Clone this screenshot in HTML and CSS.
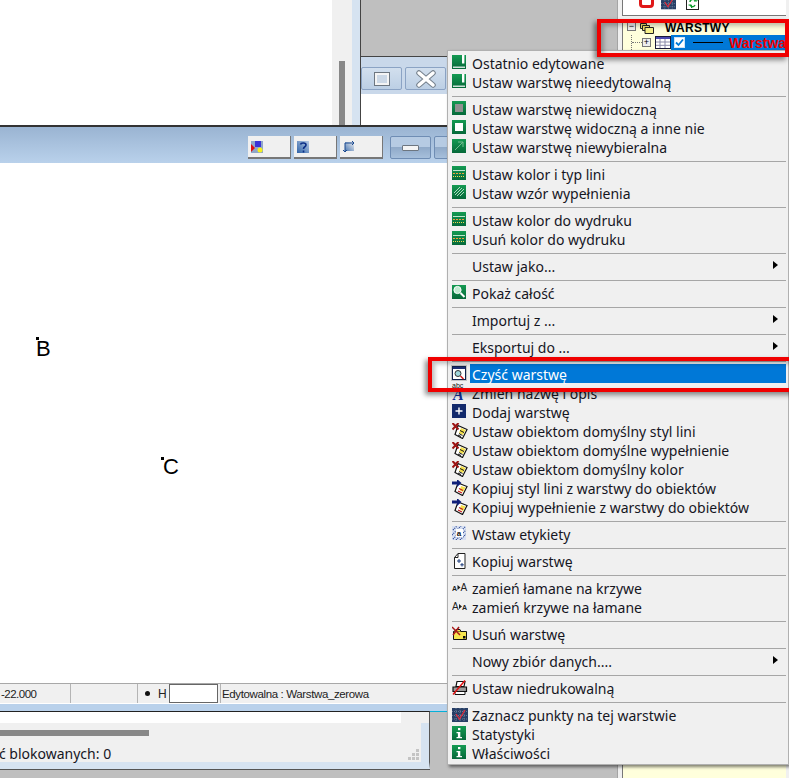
FILE: index.html
```html
<!DOCTYPE html>
<html lang="pl">
<head>
    <meta charset="UTF-8">
    <title>Warstwy</title>
    <link rel="stylesheet" href="styles.css">
</head>
<body>
    <!-- Wspolne ikony menu -->
    <svg class="defs" width="0" height="0">
        <defs>
            <linearGradient id="g-green" x1="0" y1="0" x2="0" y2="1">
                <stop offset="0" stop-color="#149a52"/>
                <stop offset="1" stop-color="#06693a"/>
            </linearGradient>
            <symbol id="i-edit" viewBox="0 0 14 14">
                <rect width="14" height="14" fill="url(#g-green)"/>
                <rect x="10" y="0" width="2.4" height="8.5" fill="#fff"/>
                <rect x="1" y="11.6" width="12" height="1.2" fill="#fff"/>
            </symbol>
            <symbol id="i-hide" viewBox="0 0 14 14">
                <rect width="14" height="14" fill="url(#g-green)"/>
                <rect x="3" y="3" width="8" height="8" fill="#909090"/>
            </symbol>
            <symbol id="i-only" viewBox="0 0 14 14">
                <rect width="14" height="14" fill="url(#g-green)"/>
                <rect x="3" y="3" width="8" height="8" fill="#fff"/>
            </symbol>
            <symbol id="i-nosel" viewBox="0 0 14 14">
                <rect width="14" height="14" fill="url(#g-green)"/>
                <path d="M3 11 11 3M6 3h5v5" fill="none" stroke="#74bb90" stroke-width="1"/>
            </symbol>
            <symbol id="i-line" viewBox="0 0 14 14">
                <rect width="14" height="14" fill="url(#g-green)"/>
                <path d="M1 4.500h12" stroke="#bfe6cc"/>
                <path d="M1 7.500h12" stroke="#f2a13a" stroke-dasharray="2 1"/>
                <path d="M1 10.500h12" stroke="#f5d94e" stroke-dasharray="1 1"/>
            </symbol>
            <symbol id="i-fill" viewBox="0 0 14 14">
                <rect width="14" height="14" fill="url(#g-green)"/>
                <path d="M2 8 8 2M3 10 10 3M5 11 12 4M8 11 12 7" stroke="#d8efe0" stroke-width=".8"/>
            </symbol>
            <symbol id="i-zoom" viewBox="0 0 14 14">
                <rect width="14" height="14" fill="url(#g-green)"/>
                <circle cx="5.5" cy="5" r="3.6" fill="#bfead0" stroke="#fff"/>
                <path d="M8.5 8 12.5 12" stroke="#fff" stroke-width="2"/>
            </symbol>
            <symbol id="i-clear" viewBox="0 0 14 14">
                <rect x=".5" y=".5" width="13" height="13" fill="#fff" stroke="#10204c"/>
                <rect x="1" y="1" width="12" height="2" fill="#1c2f73"/>
                <circle cx="6" cy="7.5" r="3" fill="#9fd6dc" stroke="#333"/>
                <path d="M8.5 10 11.5 13" stroke="#d01818" stroke-width="1.5"/>
            </symbol>
            <symbol id="i-add" viewBox="0 0 14 14">
                <rect width="14" height="14" fill="#12296b"/>
                <path d="M7 3.5v7M3.5 7h7" stroke="#fff" stroke-width="1.4"/>
            </symbol>
            <symbol id="i-xdoc" viewBox="0 0 16 16">
                <path d="M6 2.500 15 6.500 10.500 15.500 3 11.500Z" fill="#fff" stroke="#111" stroke-width="1.200"/>
                <path d="M9 5 13.500 7 11 12 7 10Z" fill="#f4e04a"/>
                <path d="M7 10.500 10.500 12.500M6 12 9 13.500M8 7.500 12 9.500" stroke="#111"/>
                <path d="M.5 0 6.500 6.500M6.500 0 .5 6.500" stroke="#9c1414" stroke-width="2"/>
            </symbol>
            <symbol id="i-adoc" viewBox="0 0 16 16">
                <path d="M6 3 15 6.500 10.500 15.500 3 11.500Z" fill="#fff" stroke="#111" stroke-width="1.200"/>
                <path d="M9 6 13.500 7.500 11 12 8 10.500Z" fill="#f4e04a"/>
                <path d="M7 8.500 11 10.500M6 11 10 13" stroke="#c01818" stroke-width="1.200"/>
                <path d="M0 1.500h5V-1L9.500 3 5 7V4.500H0Z" fill="#10207a"/>
            </symbol>
            <symbol id="i-label" viewBox="0 0 14 14">
                <rect width="14" height="14" fill="#d7e0f2"/>
                <path d="M1 4 5 0M0 9 9 0M1 13 13 1M4 14 14 4M8 14 14 8" stroke="#23408f" stroke-width="1.200" stroke-dasharray="1 1"/>
                <rect x="4" y="3" width="7" height="8" fill="#fff"/>
                <text x="4.700" y="10" class="svg-a">a</text>
            </symbol>
            <symbol id="i-copy" viewBox="0 0 14 16">
                <path d="M1.500 4.500 5 .5h7v15H1.500Z" fill="#fff" stroke="#222"/>
                <path d="M1.500 4.500H5V.5" fill="none" stroke="#222"/>
                <path d="M6 6v4M4 8h4M9 10v3.500M7.300 11.800h3.500" stroke="#1b3a7a"/>
            </symbol>
            <symbol id="i-swap-a" viewBox="0 0 16 10">
                <text x="0" y="8.500" class="svg-small">A</text>
                <path d="M5.500 3 8.500 5.500 5.500 8Z" fill="#222"/>
                <text x="8.500" y="8.500" class="svg-big">A</text>
            </symbol>
            <symbol id="i-swap-b" viewBox="0 0 16 10">
                <text x="0" y="8.500" class="svg-big">A</text>
                <path d="M7 3 10 5.500 7 8Z" fill="#222"/>
                <text x="10" y="8.500" class="svg-small">A</text>
            </symbol>
            <symbol id="i-del" viewBox="0 0 16 14">
                <path d="M1.500 4.500h13v8h-13Z" fill="#f6e64f" stroke="#111"/>
                <path d="M2 4.500 4 2.500h4l1 2" fill="#f6e64f" stroke="#111"/>
                <rect x="11" y="9" width="2.500" height="2.500" fill="#111"/>
                <path d="M0 0 8 8M7 0 1 8" stroke="#a81818" stroke-width="1.500"/>
            </symbol>
            <symbol id="i-print" viewBox="0 0 16 15">
                <path d="M5 1h8l-1 5H4Z" fill="#fff" stroke="#111" stroke-width="1.200"/>
                <path d="M1 6.500h13.500v4.500H1Z" fill="#9c9c9c" stroke="#111" stroke-width="1.200"/>
                <path d="M3 11h10v3H3Z" fill="#fff" stroke="#111"/>
                <path d="M1 14 13 0" stroke="#e01010" stroke-width="1.500"/>
            </symbol>
            <symbol id="i-mark" viewBox="0 0 16 14">
                <rect width="16" height="14" fill="#273f66"/>
                <path d="M0 3.500h16M0 7.500h16M0 11h16M4 0v14M8 0v14M12 0v14" stroke="#8494ad" stroke-width=".7" stroke-dasharray="1 1"/>
                <path d="M4 6 7.500 11 13 2" fill="none" stroke="#e02c3c" stroke-width="1.300"/>
            </symbol>
            <symbol id="i-info" viewBox="0 0 14 14">
                <rect width="14" height="14" fill="url(#g-green)"/>
                <rect x="6" y="2" width="2.400" height="2.200" fill="#fff"/>
                <path d="M4.500 6h3.800v5H10v1.300H4.500V11h1.400V7.200H4.500Z" fill="#fff"/>
            </symbol>
        </defs>
    </svg>

    <div class="desktop">
        <!-- Okno w tle po lewej -->
        <section class="win win-back">
            <div class="back-view"></div>
            <div class="back-scroll"><div class="back-thumb"></div></div>
        </section>

        <!-- Okno w tle za menu -->
        <section class="win win-side">
            <div class="side-title">
                <div class="cap-btn cap-side"><span class="glyph-max"></span></div>
                <div class="cap-btn cap-side">
                    <svg width="20" height="18" viewBox="0 0 20 18"><path d="M3 3 17 15M17 3 3 15" stroke="#75808c" stroke-width="5.500" stroke-linecap="round"/><path d="M3 3 17 15M17 3 3 15" stroke="#fff" stroke-width="3.500" stroke-linecap="round"/></svg>
                </div>
            </div>
        </section>

        <!-- Glowne okno z rysunkiem -->
        <section class="win win-main">
            <div class="main-title">
                <button class="tool-btn">
                    <svg width="12" height="12" viewBox="0 0 12 12"><rect width="12" height="12" fill="#8fa7c9"/><rect x="4" y="0" width="6" height="6" fill="#3b33d6"/><path d="M0 3 4 7 0 11Z" fill="#e01010"/><circle cx="9" cy="9" r="2.500" fill="#f6f01c"/></svg>
                </button>
                <button class="tool-btn">
                    <svg width="12" height="12" viewBox="0 0 12 12"><defs><linearGradient id="g-q" x1="0" y1="1" x2="1" y2="0"><stop offset="0" stop-color="#2f63a8"/><stop offset="1" stop-color="#b8cbe4"/></linearGradient></defs><rect width="12" height="12" fill="url(#g-q)"/><path d="M3.500 3.500C4 1.500 9 1.500 9 4 9 6 6.500 5.500 6.500 8M6.500 9.500v2" fill="none" stroke="#0c2f86" stroke-width="1.600"/></svg>
                </button>
                <button class="tool-btn">
                    <svg width="12" height="13" viewBox="0 0 12 13"><defs><linearGradient id="g-c" x1="0" y1="1" x2="1" y2="0"><stop offset="0" stop-color="#4e7ab4"/><stop offset="1" stop-color="#f0f0f0"/></linearGradient></defs><rect x="2" y="2" width="9" height="9" fill="url(#g-c)"/><path d="M2 11V3h8M9 1l2 2-2 2M0 10l2 2 2-2" fill="none" stroke="#1c4a90"/></svg>
                </button>
                <div class="cap-btn cap-main cap-min"><span class="glyph-min"></span></div>
                <div class="cap-btn cap-main"></div>
            </div>
            <div class="canvas">
                <i class="pt pt-b"></i><span class="pt-label pt-label-b">B</span>
                <i class="pt pt-c"></i><span class="pt-label pt-label-c">C</span>
            </div>
            <div class="statusbar">
                <div class="st-cell st-coord">-22.000</div>
                <div class="st-cell st-empty"></div>
                <div class="st-cell st-h">
                    <i class="st-dot"></i><span class="st-letter">H</span><div class="st-input"></div>
                </div>
                <div class="st-cell st-layer">Edytowalna : Warstwa_zerowa</div>
            </div>
            <div class="main-foot"></div>
        </section>

        <!-- Dolne okno z lista -->
        <section class="win win-list">
            <div class="list-white"></div>
            <div class="list-body">
                <div class="list-scroll"></div>
                <div class="list-row">
                    <span class="list-text">ć blokowanych: 0</span>
                    <svg class="grip" width="12" height="11" viewBox="0 0 12 11"><path d="M9 0h3v3H9ZM5 4h3v3H5ZM9 4h3v3H9ZM1 8h3v3H1ZM5 8h3v3H5ZM9 8h3v3H9Z" fill="#c4c4c4"/></svg>
                </div>
            </div>
        </section>

        <!-- Panel drzewa warstw -->
        <aside class="tree-panel">
            <div class="tree-tools">
                <span class="tool-red"></span>
                <svg class="tool-map" width="15" height="14" viewBox="0 0 16 14"><use href="#i-mark"/></svg>
                <svg class="tool-refresh" width="13" height="14" viewBox="0 0 13 14"><rect x=".5" y=".5" width="12" height="13" fill="#fff" stroke="#222"/><path d="M4 6C4 3 8 2.500 9.500 5M9 9C8 11.500 5 11 4 9" fill="none" stroke="#0c9a2c" stroke-width="1.400"/><path d="M8 5h3V2M2.500 9h3v3" fill="none" stroke="#0c9a2c"/></svg>
            </div>
            <div class="tree">
                <div class="tree-root">
                    <span class="tree-box">&minus;</span>
                    <svg width="14" height="12" viewBox="0 0 14 12"><path d="M.5 1.500h6v5h-6Z" fill="#f2e26a" stroke="#222"/><path d="M2.500 3.500h7v5h-7Z" fill="#f2e26a" stroke="#222"/><path d="M5 5.500h8.500v6H5Z" fill="#f6f08a" stroke="#222"/></svg>
                    <span class="tree-title">WARSTWY</span>
                </div>
                <div class="tree-children">
                    <div class="tree-node">
                        <span class="tree-branch"></span>
                        <span class="tree-box">+</span>
                        <svg class="tree-table" width="16" height="13" viewBox="0 0 16 13"><rect x=".5" y=".5" width="15" height="12" fill="#fff" stroke="#1a1a3a"/><rect x="1" y="1" width="14" height="2" fill="#4a4ab0"/><path d="M1 6h14M1 9.300h14M5 3v9M10 3v9" stroke="#8a8aa8"/></svg>
                        <div class="tree-selected">
                            <span class="tree-check"><svg width="9" height="9" viewBox="0 0 9 9"><path d="M1 4.500 3.500 7 8 1.500" fill="none" stroke="#0078d7" stroke-width="1.800"/></svg></span>
                            <span class="tree-line"></span>
                            <span class="tree-name">Warstwa</span>
                        </div>
                    </div>
                </div>
            </div>
        </aside>

        <!-- Menu kontekstowe warstwy -->
        <ul class="menu">
            <li class="item"><svg class="ico"><use href="#i-edit"/></svg><span class="label">Ostatnio edytowane</span></li>
            <li class="item"><svg class="ico"><use href="#i-edit"/></svg><span class="label">Ustaw warstwę nieedytowalną</span></li>
            <li class="sep"></li>
            <li class="item"><svg class="ico"><use href="#i-hide"/></svg><span class="label">Ustaw warstwę niewidoczną</span></li>
            <li class="item"><svg class="ico"><use href="#i-only"/></svg><span class="label">Ustaw warstwę widoczną a inne nie</span></li>
            <li class="item"><svg class="ico"><use href="#i-nosel"/></svg><span class="label">Ustaw warstwę niewybieralna</span></li>
            <li class="sep"></li>
            <li class="item"><svg class="ico"><use href="#i-line"/></svg><span class="label">Ustaw kolor i typ lini</span></li>
            <li class="item"><svg class="ico"><use href="#i-fill"/></svg><span class="label">Ustaw wzór wypełnienia</span></li>
            <li class="sep"></li>
            <li class="item"><svg class="ico"><use href="#i-line"/></svg><span class="label">Ustaw kolor do wydruku</span></li>
            <li class="item"><svg class="ico"><use href="#i-line"/></svg><span class="label">Usuń kolor do wydruku</span></li>
            <li class="sep"></li>
            <li class="item"><span class="ico"></span><span class="label has-sub">Ustaw jako...</span></li>
            <li class="sep"></li>
            <li class="item"><svg class="ico"><use href="#i-zoom"/></svg><span class="label">Pokaż całość</span></li>
            <li class="sep"></li>
            <li class="item"><span class="ico"></span><span class="label has-sub">Importuj z ...</span></li>
            <li class="sep"></li>
            <li class="item"><span class="ico"></span><span class="label has-sub">Eksportuj do ...</span></li>
            <li class="sep"></li>
            <li class="item active"><svg class="ico"><use href="#i-clear"/></svg><span class="label">Czyść warstwę</span></li>
            <li class="item">
                <svg class="ico ico-tall" viewBox="0 0 14 19"><text x="0" y="5" class="svg-abc">abc</text><text x="1" y="17" class="svg-bigA">A</text></svg>
                <span class="label">Zmień nazwę i opis</span>
            </li>
            <li class="item"><svg class="ico"><use href="#i-add"/></svg><span class="label">Dodaj warstwę</span></li>
            <li class="item"><svg class="ico ico-16"><use href="#i-xdoc"/></svg><span class="label">Ustaw obiektom domyślny styl lini</span></li>
            <li class="item"><svg class="ico ico-16"><use href="#i-xdoc"/></svg><span class="label">Ustaw obiektom domyślne wypełnienie</span></li>
            <li class="item"><svg class="ico ico-16"><use href="#i-xdoc"/></svg><span class="label">Ustaw obiektom domyślny kolor</span></li>
            <li class="item"><svg class="ico ico-16"><use href="#i-adoc"/></svg><span class="label">Kopiuj styl lini z warstwy do obiektów</span></li>
            <li class="item"><svg class="ico ico-16"><use href="#i-adoc"/></svg><span class="label">Kopiuj wypełnienie z warstwy do obiektów</span></li>
            <li class="sep"></li>
            <li class="item"><svg class="ico"><use href="#i-label"/></svg><span class="label">Wstaw etykiety</span></li>
            <li class="sep"></li>
            <li class="item"><svg class="ico ico-16"><use href="#i-copy"/></svg><span class="label">Kopiuj warstwę</span></li>
            <li class="sep"></li>
            <li class="item"><svg class="ico ico-swap"><use href="#i-swap-a"/></svg><span class="label">zamień łamane na krzywe</span></li>
            <li class="item"><svg class="ico ico-swap"><use href="#i-swap-b"/></svg><span class="label">zamień krzywe na łamane</span></li>
            <li class="sep"></li>
            <li class="item"><svg class="ico ico-16"><use href="#i-del"/></svg><span class="label">Usuń warstwę</span></li>
            <li class="sep"></li>
            <li class="item"><span class="ico"></span><span class="label has-sub">Nowy zbiór danych....</span></li>
            <li class="sep"></li>
            <li class="item"><svg class="ico ico-16"><use href="#i-print"/></svg><span class="label">Ustaw niedrukowalną</span></li>
            <li class="sep"></li>
            <li class="item"><svg class="ico ico-16"><use href="#i-mark"/></svg><span class="label">Zaznacz punkty na tej warstwie</span></li>
            <li class="item"><svg class="ico"><use href="#i-info"/></svg><span class="label">Statystyki</span></li>
            <li class="item"><svg class="ico"><use href="#i-info"/></svg><span class="label">Właściwości</span></li>
        </ul>

        <!-- Czerwone ramki z adnotacji -->
        <div class="callout callout-tree"></div>
        <div class="callout callout-item"></div>
    </div>
</body>
</html>
```

FILE: styles.css
```css
html, body {
    margin: 0;
    padding: 0;
}
body {
    font-family: "Noto Sans", sans-serif;
    color: #16161f;
}
.defs {
    position: absolute;
}
.desktop {
    position: relative;
    width: 789px;
    height: 778px;
    overflow: hidden;
    background: #bfbfbf;
}

/* okna */
.win {
    position: absolute;
    box-sizing: border-box;
}
.win-back {
    left: 0;
    top: 0;
    width: 361px;
    height: 126px;
    display: flex;
    background: #d6e3f1;
    border-right: 1px solid #444;
    padding-right: 8px;
}
.back-view {
    flex: 1;
    background: #fff;
}
.back-scroll {
    width: 20px;
    background: #f0f0f0;
    padding: 61px 0 0 7px;
    box-sizing: border-box;
}
.back-thumb {
    width: 6px;
    height: 65px;
    background: #888;
}
.win-side {
    left: 361px;
    top: 56px;
    width: 100px;
    height: 70px;
    background: #fff;
    border-top: 1px solid #444;
}
.side-title {
    display: flex;
    gap: 3px;
    height: 37px;
    padding-top: 10px;
    box-sizing: border-box;
    background: #c9d8ea;
}
.cap-btn {
    display: flex;
    flex: none;
    align-items: center;
    justify-content: center;
    box-sizing: border-box;
    height: 23px;
    border: 1px solid #8ba3c4;
    border-radius: 2px;
}
.cap-side {
    width: 41px;
    background: linear-gradient(#d2dfee, #bccfe4);
}
.glyph-max {
    width: 16px;
    height: 14px;
    box-sizing: border-box;
    background: #ccd8e6;
    border: 3px solid #f4f4f4;
    outline: 1px solid #6d7680;
    outline-offset: -1px;
}
.win-main {
    left: 0;
    top: 125px;
    width: 470px;
    height: 587px;
    display: flex;
    flex-direction: column;
    background: #fff;
    border-top: 2px solid #333;
}
.main-title {
    display: flex;
    flex: none;
    align-items: flex-start;
    gap: 3px;
    height: 36px;
    box-sizing: border-box;
    padding: 9px 0 0 248px;
    background: linear-gradient(#9ab4d2, #b9d1eb);
}
.tool-btn {
    display: flex;
    flex: none;
    align-items: center;
    width: 43px;
    height: 23px;
    padding: 0 0 0 3px;
    box-sizing: border-box;
    background: #f0f0f0;
    border: 0;
    border-right: 1px solid #777;
    border-bottom: 2px solid #777;
}
.cap-main {
    width: 41px;
    background: linear-gradient(#b6cbe3 50%, #90aac9 50%, #a6bfdb);
    border-color: #6f8db4;
}
.cap-min {
    margin-left: 4px;
}
.glyph-min {
    width: 17px;
    height: 6px;
    box-sizing: border-box;
    background: #f4f4f4;
    border: 1px solid #6d7680;
    border-radius: 1px;
}
.canvas {
    position: relative;
    flex: 1;
    background: #fff;
}
.pt {
    position: absolute;
    width: 3px;
    height: 3px;
    background: #000;
}
.pt-b {
    left: 36px;
    top: 174px;
}
.pt-c {
    left: 161px;
    top: 294px;
}
.pt-label {
    position: absolute;
    font-family: "Liberation Sans", sans-serif;
    font-size: 22px;
    line-height: 22px;
    color: #000;
}
.pt-label-b {
    left: 36px;
    top: 175px;
}
.pt-label-c {
    left: 163px;
    top: 293px;
}

/* pasek stanu */
.statusbar {
    display: flex;
    flex: none;
    height: 20px;
    background: #f0f0f0;
    border-top: 1px solid #a8a8a8;
    box-sizing: border-box;
    font-family: "Liberation Sans", sans-serif;
    font-size: 11.5px;
    letter-spacing: -.37px;
    color: #222;
}
.st-cell {
    display: flex;
    align-items: center;
    box-sizing: border-box;
    border-right: 1px solid #b4b4b4;
}
.st-coord {
    width: 71px;
    letter-spacing: -.5px;
    padding-left: 1px;
}
.st-empty {
    width: 67px;
}
.st-h {
    width: 83px;
    padding-left: 7px;
}
.st-dot {
    width: 5px;
    height: 5px;
    border-radius: 50%;
    background: #111;
}
.st-letter {
    width: 11px;
    margin-left: 8px;
    font-size: 12px;
    letter-spacing: 0;
}
.st-input {
    width: 49px;
    height: 19px;
    box-sizing: border-box;
    background: #fff;
    border: 1px solid #666;
}
.st-layer {
    flex: 1;
    padding-left: 1px;
    border-right: 0;
}
.main-foot {
    flex: none;
    height: 9px;
    box-sizing: border-box;
    background: #b9d1eb;
    border-top: 1px solid #fff;
    border-bottom: 1px solid #05b0d8;
}

/* dolne okno */
.win-list {
    left: 0;
    top: 711px;
    width: 430px;
    height: 58px;
    display: flex;
    flex-direction: column;
    background: #f0f0f0;
    border-top: 1px solid #222;
    border-right: 1px solid #555;
    border-bottom: 7px solid #d6e3f1;
    box-shadow: 0 1px 0 #555;
}
.list-white {
    flex: none;
    height: 11px;
    width: 401px;
    background: #fff;
}
.list-body {
    flex: 1;
    padding-top: 7px;
    border-right: 8px solid #d6e3f1;
}
.list-scroll {
    width: 149px;
    height: 6px;
    background: #888;
}
.list-row {
    display: flex;
    justify-content: space-between;
    align-items: flex-start;
    height: 26px;
    padding-right: 2px;
}
.list-text {
    padding-top: 4px;
    font-size: 14px;
    line-height: 28px;
    margin-left: -1px;
}
.grip {
    align-self: flex-end;
    margin-bottom: 2px;
}

/* panel drzewa */
.tree-panel {
    position: absolute;
    left: 617px;
    top: 0;
    width: 172px;
    height: 778px;
    box-sizing: border-box;
    background: #f0f0f0;
    border-left: 1px solid #a4a4a4;
    padding: 0 3px 0 4px;
}
.tree-tools {
    display: flex;
    align-items: flex-end;
    height: 16px;
    padding: 0 0 5px 16px;
    box-sizing: border-box;
    overflow: hidden;
    background: #fff;
    border-left: 1px solid #777;
    border-bottom: 1px solid #777;
}
.tool-red {
    flex: none;
    width: 15px;
    height: 14px;
    box-sizing: border-box;
    margin-bottom: 2px;
    border: 3px solid #e01818;
    border-radius: 4px;
}
.tool-map {
    flex: none;
    margin-left: 7px;
}
.tool-refresh {
    flex: none;
    margin-left: 10px;
}
.tree {
    height: 759px;
    margin-top: 3px;
    padding-top: 3px;
    box-sizing: border-box;
    background: #ffffdc;
    border-left: 1px solid #777;
}
.tree-root {
    display: flex;
    align-items: flex-start;
    height: 13px;
    padding-left: 4px;
}
.tree-box {
    display: flex;
    align-items: center;
    justify-content: center;
    flex: none;
    width: 9px;
    height: 9px;
    box-sizing: border-box;
    background: #eee;
    border: 1px solid #777;
    font-family: "Liberation Sans", sans-serif;
    font-size: 9px;
    line-height: 7px;
    color: #000;
}
.tree-root svg {
    margin-left: 4px;
}
.tree-title {
    margin-left: 11px;
    font-family: "Liberation Sans", sans-serif;
    font-size: 12px;
    font-weight: bold;
    line-height: 12px;
    letter-spacing: .3px;
    color: #000;
}
.tree-children {
    margin-left: 8px;
    border-left: 1px dotted #777;
}
.tree-node {
    display: flex;
    align-items: center;
    height: 15px;
}
.tree-branch {
    width: 10px;
    border-top: 1px dotted #777;
}
.tree-table {
    flex: none;
    margin-left: 4px;
}
.tree-selected {
    display: flex;
    flex: 1;
    align-items: center;
    height: 15px;
    overflow: hidden;
    background: #0078d7;
}
.tree-check {
    display: flex;
    align-items: center;
    justify-content: center;
    flex: none;
    width: 11px;
    height: 11px;
    box-sizing: border-box;
    margin-left: 3px;
    background: #fff;
    border: 1px solid #cfe3f6;
}
.tree-line {
    flex: none;
    width: 30px;
    height: 1px;
    margin-left: 8px;
    background: #000;
}
.tree-name {
    margin-left: 6px;
    font-family: "Liberation Sans", sans-serif;
    font-size: 14px;
    font-weight: bold;
    color: #f00000;
}

/* menu kontekstowe */
.menu {
    position: absolute;
    left: 447px;
    top: 50px;
    width: 342px;
    height: 715px;
    box-sizing: border-box;
    margin: 0;
    padding: 4px 2px 0 4px;
    list-style: none;
    background: #f0f0f0;
    border: 1px solid #b0b0b0;
    box-shadow: 2px 2px 3px rgba(0, 0, 0, .5);
}
.item {
    display: flex;
    height: 19px;
    font-size: 14px;
    line-height: 17px;
    white-space: nowrap;
}
.ico {
    display: block;
    flex: none;
    width: 14px;
    height: 14px;
    margin-right: 4px;
    overflow: visible;
}
.ico-16 {
    width: 16px;
    height: 16px;
    margin-right: 2px;
}
.ico-swap {
    width: 16px;
    height: 10px;
    margin: 2px 2px 0 0;
}
.ico-tall {
    height: 19px;
    margin-top: -2px;
}
.label {
    flex: 1;
    display: flex;
    justify-content: space-between;
    padding-left: 2px;
}
.has-sub::after {
    content: "";
    width: 0;
    height: 0;
    margin: 3px 8px 0 0;
    border-left: 5px solid #000;
    border-top: 4px solid transparent;
    border-bottom: 4px solid transparent;
}
.sep {
    height: 8px;
    box-sizing: border-box;
    padding-top: 3px;
}
.sep::before {
    content: "";
    display: block;
    height: 1px;
    width: 334px;
    background: #a6a6a6;
}
.active .ico {
    outline: 1px solid #c4c4c4;
}
.active .label {
    margin-top: -2px;
    height: 19px;
    padding-top: 2px;
    box-sizing: border-box;
    background: #0078d7;
    color: #fff;
}
.svg-a {
    font: bold 8px "Liberation Sans", sans-serif;
    fill: #111;
}
.svg-small {
    font: bold 7px "Liberation Sans", sans-serif;
    fill: #222;
}
.svg-big {
    font: 10px "Liberation Sans", sans-serif;
    fill: #222;
}
.svg-abc {
    font: 7px "Liberation Sans", sans-serif;
    fill: #111;
}
.svg-bigA {
    font: italic bold 16px "Liberation Serif", serif;
    fill: #10309c;
}

/* czerwone ramki */
.callout {
    position: absolute;
    box-sizing: border-box;
    border: 4px solid #f00000;
    box-shadow: -3px 3px 5px rgba(0, 0, 0, .45), inset 3px 3px 4px rgba(0, 0, 0, .25);
}
.callout-tree {
    left: 597px;
    top: 19px;
    width: 192px;
    height: 38px;
}
.callout-item {
    left: 428px;
    top: 357px;
    width: 370px;
    height: 35px;
}
```
